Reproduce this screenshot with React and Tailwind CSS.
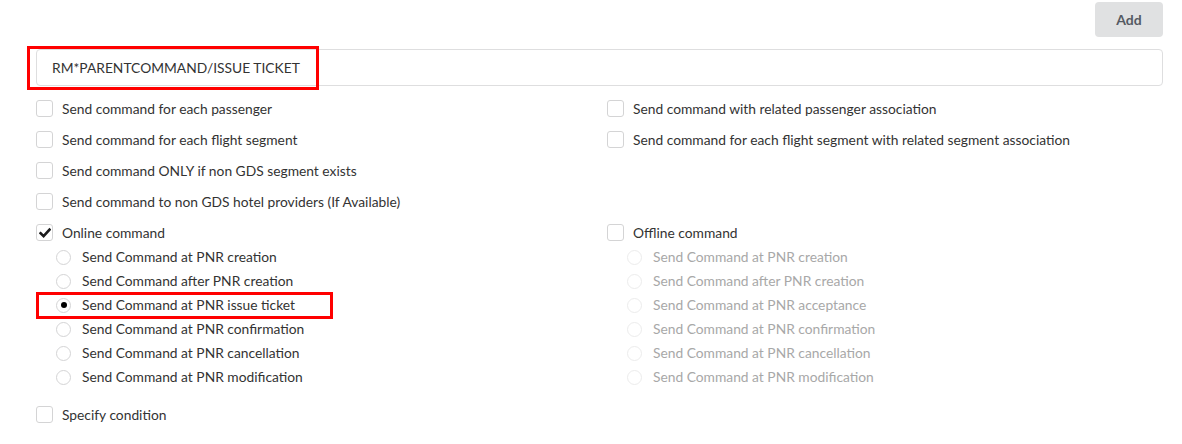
import React from "react";

function Checkbox({ checked = false, label }) {
  return (
    <div className="flex h-[31px] items-center">
      <span className="flex h-[17px] w-[17px] shrink-0 items-center justify-center rounded-[3px] border border-[#d4d4d5] bg-white">
        {checked && (
          <svg width="12" height="12" viewBox="0 0 12 12">
            <path d="M1.6 6.3 L4.6 9.1 L10.5 2.7" fill="none" stroke="#1b1c1d" strokeWidth="2.6" strokeLinecap="square" />
          </svg>
        )}
      </span>
      <span className="ml-[9px] text-[13.8px] leading-none text-[#333333]">{label}</span>
    </div>
  );
}

function Radio({ checked = false, disabled = false, label, highlight = false }) {
  return (
    <div className="relative flex h-[24px] items-center">
      {highlight && (
        <span className="pointer-events-none absolute left-[-20px] top-[-1px] h-[27px] w-[297px] border-[3px] border-[#ff0000]" />
      )}
      <span
        className={
          disabled
            ? "flex h-[15px] w-[15px] shrink-0 items-center justify-center rounded-full border border-[#ececec] bg-white"
            : "flex h-[15px] w-[15px] shrink-0 items-center justify-center rounded-full border border-[#d4d4d5] bg-white"
        }
      >
        {checked && <span className="h-[6px] w-[6px] rounded-full bg-black" />}
      </span>
      <span
        className={
          disabled
            ? "ml-[11px] text-[13.8px] leading-none text-[#a8a8a8]"
            : "ml-[11px] text-[13.8px] leading-none text-[#333333]"
        }
      >
        {label}
      </span>
    </div>
  );
}

export default function App() {
  const online = [
    "Send Command at PNR creation",
    "Send Command after PNR creation",
    "Send Command at PNR issue ticket",
    "Send Command at PNR confirmation",
    "Send Command at PNR cancellation",
    "Send Command at PNR modification",
  ];
  const offline = [
    "Send Command at PNR creation",
    "Send Command after PNR creation",
    "Send Command at PNR acceptance",
    "Send Command at PNR confirmation",
    "Send Command at PNR cancellation",
    "Send Command at PNR modification",
  ];
  return (
    <div
      className="h-[444px] w-[1182px] overflow-hidden bg-white pl-[36px] pr-[19px]"
      style={{ fontFamily: "Lato, 'Open Sans', sans-serif" }}
    >
      <div className="flex justify-end pt-[2px]">
        <button className="h-[35px] w-[68px] rounded-[4px] bg-[#e0e1e2] text-[14px] font-bold text-[#555a63]">
          Add
        </button>
      </div>
      <div className="relative mt-[12px] flex h-[37px] items-center rounded-[4px] border border-[#dededf] bg-white pl-[15px]">
        <span className="pointer-events-none absolute left-[-10px] top-[-4px] h-[44px] w-[292px] border-[3px] border-[#ff0000]" />
        <span className="text-[13.8px] leading-none text-[#333333]">RM*PARENTCOMMAND/ISSUE TICKET</span>
      </div>
      <div className="mt-[7px] grid grid-cols-[571px_1fr]">
        <div>
          <Checkbox label="Send command for each passenger" />
          <Checkbox label="Send command for each flight segment" />
          <Checkbox label="Send command ONLY if non GDS segment exists" />
          <Checkbox label="Send command to non GDS hotel providers (If Available)" />
          <Checkbox checked label="Online command" />
          <div className="mt-[-3px] pl-[20px]">
            {online.map((l, i) => (
              <Radio key={l} label={l} checked={i === 2} highlight={i === 2} />
            ))}
          </div>
        </div>
        <div>
          <Checkbox label="Send command with related passenger association" />
          <Checkbox label="Send command for each flight segment with related segment association" />
          <div className="h-[62px]" />
          <Checkbox label="Offline command" />
          <div className="mt-[-3px] pl-[20px]">
            {offline.map((l) => (
              <Radio key={l} label={l} disabled />
            ))}
          </div>
        </div>
      </div>
      <div className="mt-[10px]">
        <Checkbox label="Specify condition" />
      </div>
    </div>
  );
}
